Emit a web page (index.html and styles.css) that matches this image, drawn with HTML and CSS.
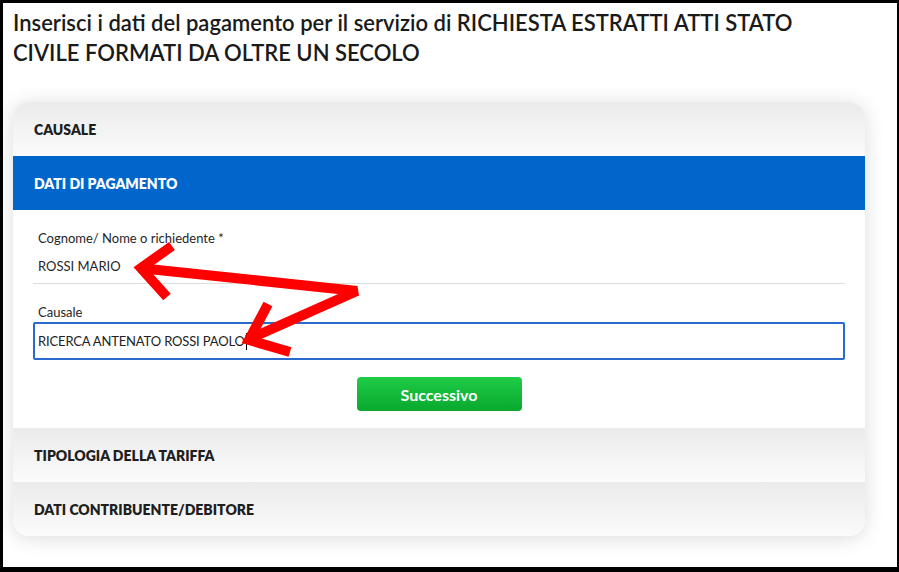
FILE: index.html
```html
<!DOCTYPE html>
<html lang="it">
<head>
    <meta charset="UTF-8">
    <meta name="viewport" content="width=device-width, initial-scale=1.0">
    <title>Dati del pagamento</title>
    <link rel="stylesheet" href="styles.css">
</head>
<body>

    <div class="frame">
        <h1 class="page-title">Inserisci i dati del pagamento per il servizio di RICHIESTA ESTRATTI ATTI STATO CIVILE FORMATI DA OLTRE UN SECOLO</h1>

        <!-- accordion dei passi -->
        <div class="steps">
            <div class="step-head">CAUSALE</div>
            <div class="step-head active">DATI DI PAGAMENTO</div>

            <div class="step-body">
                <div class="field line">
                    <div class="field-label">Cognome/ Nome o richiedente *</div>
                    <div class="field-value">ROSSI MARIO</div>
                </div>

                <div class="field">
                    <div class="field-label">Causale</div>
                    <div class="field-box">RICERCA ANTENATO ROSSI PAOLO<span class="caret"></span></div>
                </div>

                <div class="actions">
                    <button class="btn-next">Successivo</button>
                </div>
            </div>

            <div class="step-head">TIPOLOGIA DELLA TARIFFA</div>
            <div class="step-head last">DATI CONTRIBUENTE/DEBITORE</div>
        </div>

        <!-- frecce di annotazione -->
        <svg class="arrows" width="899" height="572" viewBox="0 0 899 572">
            <g fill="none" stroke="#ff0000" stroke-width="10" stroke-miterlimit="10">
                <polyline points="139,268 357,291 247,340" stroke-linejoin="bevel"/>
                <polyline points="172,246 141,268 167,297"/>
                <polyline points="268,304 249,340 290,352"/>
            </g>
        </svg>
    </div>

</body>
</html>
```

FILE: styles.css
```css
html, body {
    margin: 0;
    background-color: #ffffff;
    font-family: "Lato", "Noto Sans", sans-serif;
    color: #1c1c1c;
}

.frame {
    position: relative;
    height: 572px;
    box-sizing: border-box;
    border-style: solid;
    border-color: #000000;
    border-width: 3px 2px 5px 3px;
    padding: 5px 30px 0 10px;
    overflow: hidden;
}

.page-title {
    margin: 0;
    max-width: 820px;
    font-size: 22px;
    line-height: 30px;
    font-weight: 600;
    color: #1a1a1a;
}

.steps {
    margin-top: 34px;
    width: 852px;
    border-radius: 16px;
    background-color: #ffffff;
    box-shadow: 0 2px 20px rgba(0, 0, 0, 0.14);
    overflow: hidden;
}

.step-head {
    height: 54px;
    display: flex;
    align-items: center;
    padding-left: 21px;
    font-size: 14px;
    font-weight: 800;
    color: #1e1e1e;
    background: linear-gradient(#ebebeb, #fbfbfb);
}

.step-head.active {
    background: #0066cc;
    color: #ffffff;
}

.step-body {
    padding: 18px 20px 17px 20px;
    background-color: #ffffff;
}

.field-label,
.field-value {
    padding-left: 5px;
    font-size: 13px;
    line-height: 20px;
    color: #262626;
}

.field-value {
    margin-top: 8px;
}

.field.line {
    padding-bottom: 7px;
    border-bottom: 1px solid #dcdcdc;
    margin-bottom: 18px;
}

.field-box {
    height: 38px;
    box-sizing: border-box;
    border: 2px solid #2a6acd;
    border-radius: 2px;
    padding: 7px 3px 0 3px;
    font-size: 13px;
    line-height: 20px;
    letter-spacing: -0.15px;
    color: #222222;
}

.caret {
    display: inline-block;
    width: 1px;
    height: 17px;
    margin-left: 1px;
    background-color: #000000;
    vertical-align: -4px;
}

.actions {
    display: flex;
    justify-content: center;
    margin-top: 17px;
}

.btn-next {
    width: 165px;
    height: 34px;
    border: none;
    border-radius: 4px;
    background: linear-gradient(#1fcc47, #08a82d);
    color: #ffffff;
    font-family: inherit;
    font-size: 16px;
    font-weight: 700;
    cursor: pointer;
}

.arrows {
    position: absolute;
    top: -3px;
    left: -3px;
    pointer-events: none;
}
```
